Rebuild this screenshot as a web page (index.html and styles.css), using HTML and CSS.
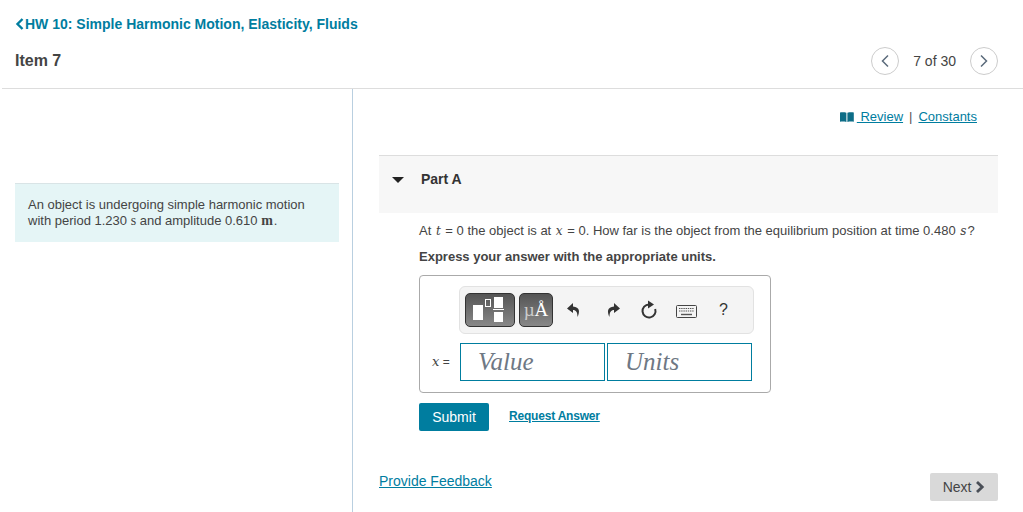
FILE: index.html
```html
<!DOCTYPE html>
<html lang="en">
<head>
  <meta charset="UTF-8">
  <meta name="viewport" content="width=device-width, initial-scale=1.0">
  <title>Item 7</title>
  <link rel="stylesheet" href="styles.css">
</head>
<body>

  <!-- Header -->
  <header class="page-header">
    <a class="back-link" href="#">
      <svg class="back-icon" width="9" height="12" viewBox="0 0 9 12"><path d="M7.5 1 L2.5 6 L7.5 11" fill="none" stroke="#007d9f" stroke-width="2.4"/></svg>HW 10: Simple Harmonic Motion, Elasticity, Fluids
    </a>
    <div class="item-row">
      <h1 class="item-title">Item 7</h1>
      <div class="pager">
        <button class="pager-btn" aria-label="Previous">
          <svg width="10" height="14" viewBox="0 0 10 14"><path d="M8 1.5 L2.5 7 L8 12.5" fill="none" stroke="#5b6b7c" stroke-width="1.5"/></svg>
        </button>
        <span class="pager-text">7 of 30</span>
        <button class="pager-btn" aria-label="Next">
          <svg width="10" height="14" viewBox="0 0 10 14"><path d="M2 1.5 L7.5 7 L2 12.5" fill="none" stroke="#5b6b7c" stroke-width="1.5"/></svg>
        </button>
      </div>
    </div>
  </header>

  <div class="columns">

    <!-- Left intro -->
    <aside class="left-col">
      <div class="intro">
        <p>An object is undergoing simple harmonic motion</p>
        <p>with period 1.230 <span class="math-up">s</span> and amplitude 0.610 <span class="math-up math-m">m</span>.</p>
      </div>
    </aside>

    <!-- Right question -->
    <main class="right-col">
      <div class="links">
        <a href="#"><svg class="book-icon" width="14" height="10" viewBox="0 0 14 10"><path d="M0 0.5 C2 0.2 4.5 0.2 6.4 0.8 V10 C4.5 9.4 2 9.4 0 9.7 Z M7.4 0.8 C9.3 0.2 11.8 0.2 13.8 0.5 V9.7 C11.8 9.4 9.3 9.4 7.4 10 Z" fill="#0d6d87"/></svg> Review</a>
        <span class="links-sep">|</span>
        <a href="#">Constants</a>
      </div>

      <div class="part-head">
        <span class="caret"></span>
        <h2 class="part-title">Part A</h2>
      </div>

      <div class="question">
        <p class="q-text">At <i class="math">t</i> = 0 the object is at <i class="math">x</i> = 0. How far is the object from the equilibrium position at time 0.480 <i class="math">s</i>?</p>
        <p class="q-hint">Express your answer with the appropriate units.</p>

        <div class="answer-box">
          <div class="toolbar">
            <button class="tool-dark tool-templates" aria-label="Templates">
              <svg width="36" height="26" viewBox="0 0 36 26">
                <rect x="1" y="8" width="10" height="15" fill="#fff"/>
                <rect x="13.5" y="2.5" width="5" height="7" fill="none" stroke="#fff" stroke-width="1"/>
                <rect x="22" y="0" width="9" height="11" fill="#fff"/>
                <rect x="21" y="12" width="11" height="1" fill="#fff"/>
                <rect x="22" y="15" width="9" height="10" fill="#fff"/>
              </svg>
            </button>
            <button class="tool-dark tool-units"><span class="tool-mu">µ</span>Å</button>
            <svg class="tool-undo" width="16" height="16" viewBox="0 0 16 16"><path d="M7 1 L1 6.5 L7 11 V8 C10 8 11.5 10 11.5 15 C14 10 14 5 7 4.5 Z" fill="#333"/></svg>
            <svg class="tool-redo" width="16" height="16" viewBox="0 0 16 16"><path d="M9 1 L15 6.5 L9 11 V8 C6 8 4.5 10 4.5 15 C2 10 2 5 9 4.5 Z" fill="#333"/></svg>
            <svg class="tool-reset" width="18" height="20" viewBox="0 0 18 20"><path d="M9 4.5 A6.5 6.5 0 1 0 15.2 9" fill="none" stroke="#333" stroke-width="2"/><path d="M8 0.5 L14 4.5 L8 8.5 Z" fill="#333"/></svg>
            <svg class="tool-keys" width="21" height="13" viewBox="0 0 21 13">
              <rect x="0.5" y="0.5" width="20" height="12" rx="1" fill="#f4f4f4" stroke="#444"/>
              <path d="M3 3.5 H18 M3 6 H18" stroke="#555" stroke-width="1.2" stroke-dasharray="1.4 0.8"/>
              <path d="M5 9.5 H16" stroke="#555" stroke-width="1.4"/>
            </svg>
            <span class="tool-help">?</span>
          </div>
          <div class="input-row">
            <span class="input-label"><i class="math">x</i> =</span>
            <div class="math-input">Value</div>
            <div class="math-input">Units</div>
          </div>
        </div>

        <div class="actions">
          <button class="submit-btn">Submit</button>
          <a class="request-link" href="#">Request Answer</a>
        </div>
      </div>

      <div class="page-foot">
        <a class="feedback-link" href="#">Provide Feedback</a>
        <button class="next-btn">Next <svg class="next-icon" width="10" height="12" viewBox="0 0 10 12"><path d="M2 1 L7.2 6 L2 11" fill="none" stroke="#4a4f57" stroke-width="2.8"/></svg></button>
      </div>
    </main>
  </div>

</body>
</html>
```

FILE: styles.css
```css
/* Basic Reset */
* {
  margin: 0;
  padding: 0;
  box-sizing: border-box;
}

body {
  width: 1023px;
  height: 512px;
  overflow: hidden;
  background-color: #fff;
  color: #333;
  font-family: 'Liberation Sans', Arial, sans-serif;
  font-size: 14px;
}

a {
  color: #007d9f;
}

button {
  font-family: inherit;
  border: none;
}

/* Header */
.page-header {
  height: 89px;
  margin-left: 2px;
  padding: 16px 25px 0 13px;
  border-bottom: 1px solid #ddd;
}

.back-link {
  display: flex;
  align-items: center;
  height: 16px;
  color: #007d9f;
  font-size: 14px;
  font-weight: bold;
  text-decoration: none;
}

.back-icon {
  margin-right: 1px;
}

.item-row {
  display: flex;
  justify-content: space-between;
  align-items: center;
  height: 30px;
  margin-top: 14px;
}

.item-title {
  font-size: 16px;
  font-weight: bold;
  color: #444;
}

.pager {
  display: flex;
  align-items: center;
  gap: 14px;
}

.pager-btn {
  display: flex;
  justify-content: center;
  align-items: center;
  width: 28px;
  height: 28px;
  border: 1px solid #ccc;
  border-radius: 50%;
  background-color: #fff;
}

.pager-text {
  color: #444;
}

/* Columns */
.columns {
  display: flex;
  height: 423px;
}

.left-col {
  width: 353px;
  padding: 94px 13px 0 15px;
  border-right: 1px solid #b9cfe0;
}

.intro {
  height: 59px;
  padding: 13px 13px 0;
  background-color: #e5f5f6;
  border-top: 1px solid #d9e4e6;
  font-size: 13px;
  line-height: 16px;
  color: #444;
}

.math-up {
  font-family: 'Liberation Serif', serif;
  font-size: 14px;
  line-height: 14px;
}

.math-m {
  margin-right: 1px;
  font-weight: bold;
}

.math {
  display: inline-block;
  padding: 0 1px;
  font-family: 'DejaVu Serif', 'Liberation Serif', serif;
  font-size: 12px;
  line-height: 14px;
}

.right-col {
  flex: 1;
  padding: 0 25px 0 26px;
}

/* Review links */
.links {
  display: flex;
  justify-content: flex-end;
  align-items: center;
  gap: 6px;
  height: 16px;
  margin-top: 19px;
  padding-right: 21px;
  font-size: 13px;
}

.book-icon {
  margin-right: 3px;
  vertical-align: -1px;
}

.links-sep {
  color: #555;
}

/* Part A */
.part-head {
  display: flex;
  align-items: flex-start;
  height: 58px;
  margin-top: 31px;
  padding: 15px 0 0 13px;
  background-color: #f7f7f7;
  border-top: 1px solid #ddd;
}

.caret {
  width: 0;
  height: 0;
  margin-top: 6px;
  border-left: 6px solid transparent;
  border-right: 6px solid transparent;
  border-top: 6px solid #222;
}

.part-title {
  margin-left: 17px;
  font-size: 14px;
  font-weight: bold;
  color: #333;
}

/* Question */
.question {
  padding: 10px 0 0 40px;
}

.q-text {
  height: 16px;
  font-size: 13px;
  line-height: 16px;
  white-space: nowrap;
  color: #444;
}

.q-hint {
  margin-top: 10px;
  font-size: 13px;
  line-height: 16px;
  font-weight: bold;
  color: #444;
}

.answer-box {
  width: 352px;
  height: 118px;
  margin-top: 10px;
  padding: 10px 16px 0 12px;
  border: 1px solid #aaa;
  border-radius: 4px;
}

.toolbar {
  display: flex;
  align-items: center;
  width: 295px;
  height: 48px;
  margin-left: 27px;
  padding-left: 5px;
  background-color: #f4f4f4;
  border: 1px solid #e2e2e2;
  border-radius: 6px;
}

.tool-dark {
  display: flex;
  justify-content: center;
  align-items: center;
  height: 34px;
  border: 1px solid #333;
  border-radius: 5px;
  background: linear-gradient(#555, #888);
  color: #fff;
}

.tool-templates {
  width: 50px;
}

.tool-units {
  width: 34px;
  margin-left: 4px;
  font-family: 'Liberation Serif', serif;
  font-size: 19px;
}

.tool-mu {
  color: #ccc;
}

.tool-undo {
  margin-left: 13px;
}

.tool-redo {
  margin-left: 23px;
}

.tool-reset {
  margin-left: 19px;
}

.tool-keys {
  margin: 2px 0 0 18px;
}

.tool-help {
  margin-left: 22px;
  font-size: 16px;
  color: #333;
}

.input-row {
  display: flex;
  align-items: center;
  margin-top: 9px;
}

.input-label {
  width: 28px;
  font-size: 12px;
  color: #444;
  white-space: nowrap;
}

.input-label .math {
  padding: 0;
  font-size: 13px;
}

.math-input {
  width: 145px;
  height: 38px;
  margin-right: 2px;
  padding-left: 17px;
  border: 1px solid #007d9f;
  font-family: 'Liberation Serif', serif;
  font-size: 25px;
  font-style: italic;
  line-height: 36px;
  color: #6e7884;
}

/* Actions */
.actions {
  display: flex;
  align-items: center;
  margin-top: 10px;
}

.submit-btn {
  width: 70px;
  height: 28px;
  border-radius: 2px;
  background-color: #007d9f;
  color: #fff;
  font-size: 14px;
}

.request-link {
  margin: -3px 0 0 20px;
  font-size: 12px;
  font-weight: bold;
  letter-spacing: -0.2px;
}

/* Footer row */
.page-foot {
  display: flex;
  justify-content: space-between;
  align-items: center;
  height: 28px;
  margin-top: 42px;
}

.feedback-link {
  margin-top: -12px;
  font-size: 14px;
}

.next-btn {
  width: 68px;
  height: 28px;
  border-radius: 2px;
  background-color: #d9d9d9;
  color: #444;
  font-size: 14px;
}

.next-icon {
  vertical-align: -1px;
}
```
